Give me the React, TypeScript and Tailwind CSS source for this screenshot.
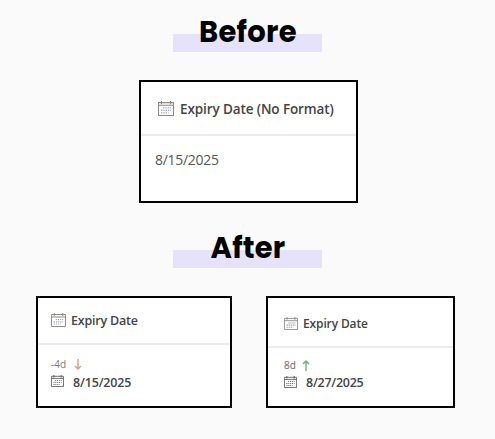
type IconProps = { className: string; color: string; dots: string };

function CalendarIcon({ className, color, dots }: IconProps) {
  return (
    <svg className={className} viewBox="0 0 16 14" preserveAspectRatio="none" fill="none" stroke={color}>
      <path d="M.5 1.5h15v12H.5zM.5 4h15M3.5 0v3M12.5 0v3" />
      <path d="M5 6.5h8M3 8.8h10M3 11h7.5" stroke={dots} strokeWidth="1.2" strokeDasharray="1.3 1" />
    </svg>
  );
}

function Arrow({ up = false }: { up?: boolean }) {
  return (
    <svg className="h-[11px] w-[8px]" viewBox="0 0 8 11" fill="none" stroke={up ? "#6db07a" : "#d69c88"} strokeWidth="1.4">
      <path d={up ? "M4 11V1M1 4l3-3 3 3" : "M4 0v10M1 7l3 3 3-3"} />
    </svg>
  );
}

function Heading({ text, className }: { text: string; className: string }) {
  return (
    <h2 className="mx-auto flex h-[36px] w-[149px] justify-center bg-linear-to-b from-transparent from-50% to-[#e6e2fa] to-50% text-black">
      <span className={"font-['Poppins','Inter',sans-serif] font-bold whitespace-nowrap " + className}>{text}</span>
    </h2>
  );
}

export default function App() {
  return (
    <main className="h-[439px] w-[495px] overflow-hidden bg-[#fafafa] pt-[16px] font-['Open_Sans','Noto_Sans',sans-serif] text-[#444]">
      <Heading text="Before" className="pl-[1px] text-[29px] leading-[32px] tracking-[0.3px]" />
      <section className="mt-[28px] ml-[139px] h-[123px] w-[219px] border-2 border-black bg-white">
        <header className="flex h-[54px] items-center border-b-2 border-[#ebebeb] pl-[17px]">
          <CalendarIcon className="h-[15px] w-[16px]" color="#8c8985" dots="#9aa5b4" />
          <span className="mt-[2px] ml-[6px] text-[13.5px] font-semibold tracking-[-0.11px] whitespace-nowrap">Expiry Date (No Format)</span>
        </header>
        <p className="mt-[14px] ml-[14px] text-[14px] leading-[20px] tracking-[-0.3px] text-[#555]">8/15/2025</p>
      </section>
      <div className="mt-[29px]">
        <Heading text="After" className="pl-[1px] text-[29px] leading-[32px] tracking-[0.2px]" />
      </div>
      <div className="mt-[28px] ml-[36px] flex gap-[34px]">
        <section className="h-[112px] w-[196px] border-2 border-black bg-white">
          <header className="flex h-[47px] items-center border-b-2 border-[#ebebeb] pl-[13px]">
            <CalendarIcon className="mb-[1px] h-[14px] w-[15px]" color="#8c8985" dots="#a5a0b4" />
            <span className="mt-[1px] ml-[5px] text-[12.5px] font-semibold tracking-[-0.2px]">Expiry Date</span>
          </header>
          <div className="mt-[12px] ml-[13px] flex h-[14px] items-center gap-[6px] text-[10px] text-[#777]"><span className="w-[17px]">-4d</span><Arrow /></div>
          <div className="mt-[1px] ml-[13px] flex h-[20px] items-center">
            <CalendarIcon className="mb-[2px] h-[12px] w-[13px]" color="#54514f" dots="#77737a" />
            <span className="mt-[2px] ml-[9px] text-[12.5px] font-semibold tracking-[-0.17px]">8/15/2025</span>
          </div>
        </section>
        <section className="h-[112px] w-[189px] border-2 border-black bg-white">
          <header className="flex h-[50px] items-center border-b-2 border-[#ebebeb] pt-[3px] pl-[16px]">
            <CalendarIcon className="mb-[1px] h-[13px] w-[14px]" color="#8c8985" dots="#9290a5" />
            <span className="mt-[1px] ml-[5px] text-[12px] font-semibold tracking-[-0.13px]">Expiry Date</span>
          </header>
          <div className="mt-[10px] ml-[16px] flex h-[14px] items-center gap-[6px] text-[10px] text-[#666]"><span>8d</span><Arrow up /></div>
          <div className="ml-[16px] flex h-[20px] items-center">
            <CalendarIcon className="h-[12px] w-[13px]" color="#54514f" dots="#77657a" />
            <span className="mt-[3px] ml-[9px] text-[12.5px] font-semibold tracking-[-0.26px]">8/27/2025</span>
          </div>
        </section>
      </div>
    </main>
  );
}
